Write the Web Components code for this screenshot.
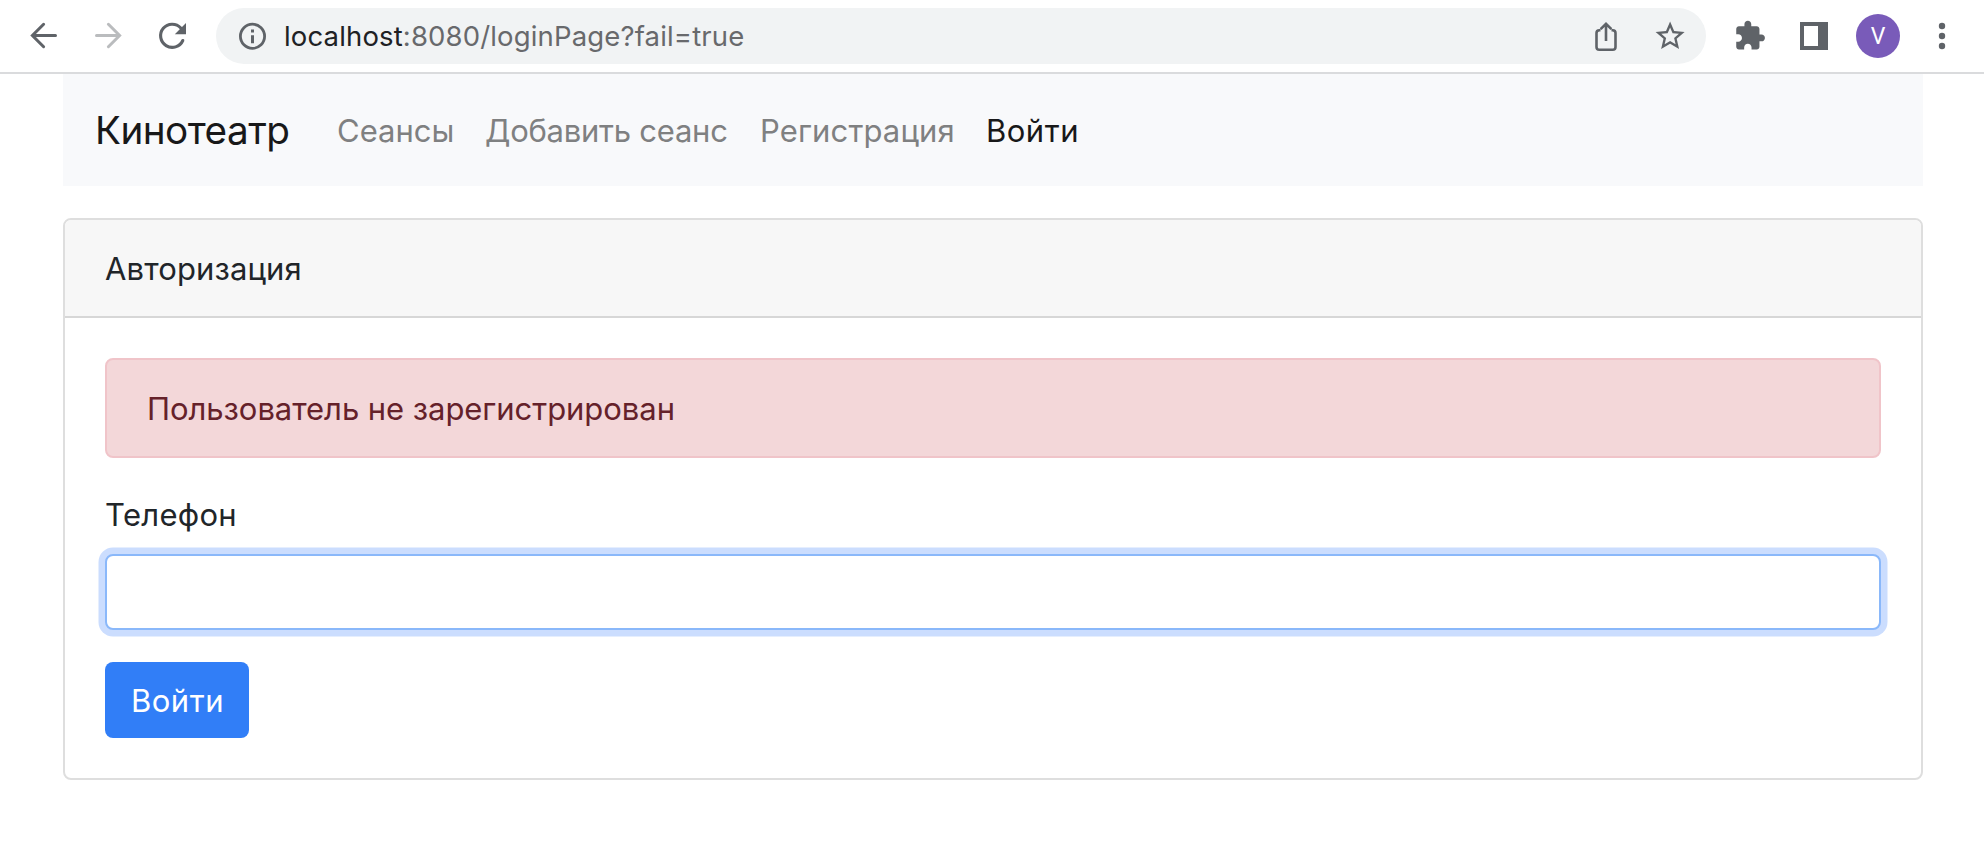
<!DOCTYPE html>
<html lang="ru"><head><meta charset="utf-8"><title>Кинотеатр</title>
<style>
body{margin:0;background:#fff;color:#212529;font-family:Inter,"Liberation Sans",sans-serif}
</style></head><body>
<browser-bar></browser-bar>
<cinema-page></cinema-page>
<script>
const define=(name,html)=>customElements.define(name,class extends HTMLElement{
  constructor(){super();this.attachShadow({mode:'open'}).innerHTML=html;}
});
define('text-run',`<style>:host{display:block;white-space:nowrap;padding-top:2px;line-height:46px;font-size:31px}</style><slot></slot>`);
define('browser-bar',`<style>
:host{display:flex;height:72px;border-bottom:2px solid #dadbdd;color:#5f6368;background:#fff}
svg{display:block;height:72px;flex:none}
.nav{display:flex;gap:24px;padding-left:24px}
.omni{display:flex;align-items:center;margin:8px 22px 8px 24px;width:1490px;height:56px;border-radius:28px;background:#f1f3f4;flex:none}
.omni text-run{margin-left:14px;flex:1;padding:0;font-size:27.5px;letter-spacing:.15px;color:#68696c}
b{font-weight:400;color:#202124}
.tools{display:flex;gap:24px}
.avatar{width:44px;height:44px;margin:14px 0;border-radius:50%;background:#795bb9;color:#fff;font:400 23px/45px Roboto,sans-serif;text-align:center}
</style>
<div class="nav">
<svg width="40" viewBox="24 0 40 72" fill="none" stroke="#5f6368" stroke-width="3" stroke-linecap="round"><path d="M55.5 35.500H33M43.600 24.300 32.400 35.500l11.200 11.200"/></svg>
<svg width="40" viewBox="88 0 40 72" fill="none" stroke="#babcbe" stroke-width="3" stroke-linecap="round"><path d="M96.500 35.500h22.500M108.400 24.300l11.200 11.200-11.200 11.200"/></svg>
<svg width="40" viewBox="152 0 40 72" fill="none" stroke="#5f6368" stroke-width="3.1" stroke-linecap="round"><path d="M180.800 28A11.600 11.600 0 1 0 182.800 40.500"/><path d="M186 23v11.200h-11.200z" fill="#5f6368" stroke="none"/></svg>
</div>
<div class="omni">
<svg style="margin-left:20px" width="34" viewBox="236 0 34 72"><circle cx="252.500" cy="36.300" r="12.100" fill="none" stroke="#5f6368" stroke-width="2.800"/><path d="M251 29.600h3v3h-3zM251 35.300h3v8h-3z" fill="#5f6368"/></svg>
<text-run><b>localhost</b>:8080/loginPage?fail=true</text-run>
<svg width="122" viewBox="1584 0 122 72" fill="none" stroke="#5f6368" stroke-width="2.600"><path d="M1600.500 30.300h-1.200q-2.800 0-2.800 2.800v13.800q0 2.800 2.800 2.800h13.400q2.800 0 2.800-2.800V33.100q0-2.800-2.800-2.800h-1.200M1606 41V24.500M1600.600 29.200l5.400-5.400 5.400 5.400"/><path fill="#5f6368" stroke="none" transform="translate(1652.700 18.600) scale(1.45)" d="M22 9.240l-7.190-.620L12 2 9.190 8.630 2 9.240l5.460 4.730L5.820 21 12 17.270 18.180 21l-1.630-7.030L22 9.240zM12 15.400l-3.760 2.270 1-4.280-3.320-2.880 4.380-.380L12 6.100l1.710 4.040 4.380.380-3.320 2.880 1 4.280L12 15.400z"/></svg>
</div>
<div class="tools">
<svg width="44" viewBox="1728 0 44 72" fill="#5f6368"><path transform="translate(1733.500 19.500) scale(1.366)" d="M20.500 11H19V7c0-1.100-.9-2-2-2h-4V3.500C13 2.120 11.880 1 10.500 1S8 2.120 8 3.500V5H4c-1.100 0-1.990.9-1.990 2v3.800H3.500c1.490 0 2.700 1.210 2.700 2.700s-1.210 2.700-2.700 2.700H2V20c0 1.100.9 2 2 2h3.800v-1.500c0-1.490 1.210-2.700 2.700-2.700s2.700 1.210 2.700 2.700V22H17c1.100 0 2-.9 2-2v-4h1.500c1.380 0 2.500-1.120 2.500-2.500S21.880 11 20.500 11z"/></svg>
<svg width="36" viewBox="1796 0 36 72"><path d="M1800 22h28v28h-28zM1804 26v20h14V26z" fill="#5f6368" fill-rule="evenodd"/></svg>
<div class="avatar">V</div>
<svg width="36" viewBox="1924 0 36 72" fill="#5f6368"><circle cx="1942" cy="26" r="3.200"/><circle cx="1942" cy="36" r="3.200"/><circle cx="1942" cy="46" r="3.200"/></svg>
</div>`);
define('nav-bar',`<style>
:host{display:flex;align-items:center;box-sizing:border-box;height:112px;padding:0 32px;background:#f8f9fb;color:#7f8081}
.brand{padding:0;font-size:38.700px;letter-spacing:-.55px;color:#181819;width:242px}
.l{margin-right:32px}
.seances{width:116px}
.add{width:243px;letter-spacing:-.25px}
.reg{width:194px;letter-spacing:.13px}
.on{color:#181819;letter-spacing:.5px}
</style><text-run class="brand">Кинотеатр</text-run><text-run class="l seances">Сеансы</text-run><text-run class="l add">Добавить сеанс</text-run><text-run class="l reg">Регистрация</text-run><text-run class="on">Войти</text-run>`);
define('form-card',`<style>
:host{display:block;border:2px solid #dedede;border-radius:8px;overflow:hidden;background:#fff}
header{padding:24px 40px;border-bottom:2px solid #d7d7d7;background:#f7f7f7;letter-spacing:.12px}
.body{padding:40px}
</style><header><slot name="title"></slot></header><div class="body"><slot></slot></div>`);
define('alert-box',`<style>
:host{display:block;padding:24px 40px;border:2px solid #f0c4c9;border-radius:8px;background:#f3d7d9;color:#65212a;letter-spacing:-.05px}
</style><text-run><slot></slot></text-run>`);
define('phone-field',`<style>
:host{display:block;margin-top:32px}
text-run{letter-spacing:.3px}
input{display:block;box-sizing:border-box;width:100%;height:76px;margin:16px 0 0;padding:12px 24px;border:2px solid #8ab8fa;border-radius:8px;outline:0;box-shadow:0 0 0 6.500px #cbddfe;font:31px Inter,sans-serif}
</style><text-run><label for="p">Телефон</label></text-run><input id="p" type="tel">`);
define('submit-button',`<style>
:host{display:block;margin-top:32px}
button{display:block;width:144px;height:76px;border:0;border-radius:8px;padding:0 0 0 26px;text-align:left;background:#317ef7;color:#fff;font:31px Inter,sans-serif;letter-spacing:.5px}
</style><button><text-run><slot></slot></text-run></button>`);
define('cinema-page',`<style>
:host{display:block;padding:0 61px 0 63px}
form-card{margin-top:32px}
</style><nav-bar></nav-bar><form-card><text-run slot="title">Авторизация</text-run><alert-box>Пользователь не зарегистрирован</alert-box><phone-field></phone-field><submit-button>Войти</submit-button></form-card>`);
</script></body></html>
